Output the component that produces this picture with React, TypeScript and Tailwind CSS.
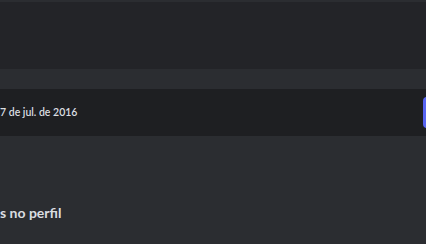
export default function App() {
  return (
    <div className="flex h-[244px] w-[426px] flex-col overflow-hidden bg-[#2b2d31] text-[#dbdee1]" style={{ fontFamily: 'Lato, "Noto Sans", sans-serif' }}>
      <div className="h-[2px] bg-[#2b2d31]" />
      <div className="h-[67px] bg-[#232428]" />
      <div className="h-[20px] bg-[#2b2d31]" />
      <div className="flex h-[47px] items-center justify-between bg-[#1e1f22]">
        <span className="text-[10.5px] font-semibold leading-none">7 de jul. de 2016</span>
        <div className="mr-[-20px] h-[31px] w-[23px] rounded-[4px] bg-[#5865f2]" />
      </div>
      <div className="flex flex-1 flex-col pt-[70px]">
        <span className="text-[14px] font-bold leading-none text-[#dbdee1]">s no perfil</span>
      </div>
    </div>
  );
}
